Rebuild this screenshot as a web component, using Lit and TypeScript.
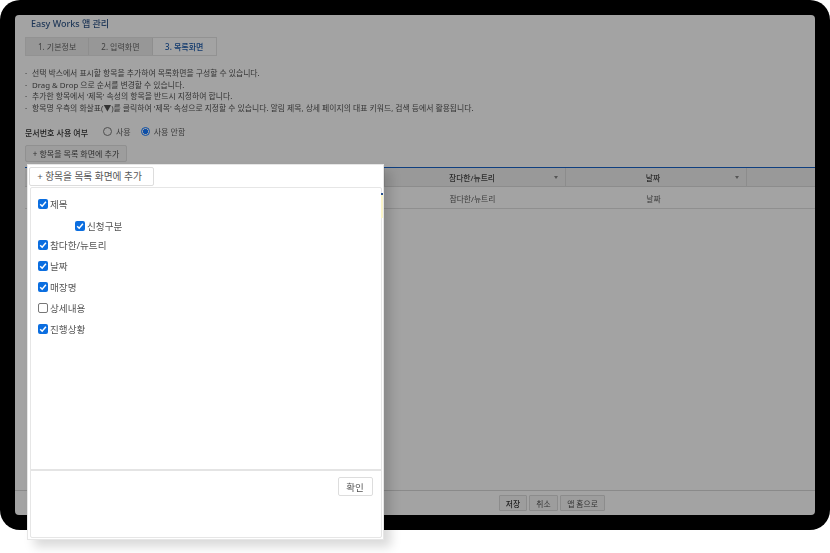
import { LitElement, html, css } from "lit";
import { customElement } from "lit/decorators.js";

const items = [
  { label: "제목", on: true },
  { label: "신청구분", on: true, sub: true },
  { label: "참다한/뉴트리", on: true },
  { label: "날짜", on: true },
  { label: "매장명", on: true },
  { label: "상세내용", on: false },
  { label: "진행상황", on: true },
];

@customElement("app-root")
export class AppRoot extends LitElement {
  static styles = css`
    :host { display: block; width: 830px; height: 553px; position: relative; overflow: hidden; background: #fff;
      font-family: "Noto Sans", "Noto Sans CJK KR", sans-serif; }
    * { box-sizing: border-box; }
    .frame { width: 829.5px; height: 530px; background: #000; border-radius: 20px; padding: 15px; filter: blur(.3px); }
    .screen { width: 800px; height: 500px; background: #a3a3a3; border-radius: 4px; display: flex; flex-direction: column; overflow: hidden; color: #333; }
    .content { flex: 1; padding: 0 0 0 12px; display: flex; flex-direction: column; }
    .title { font-size: 9px; line-height: 12px; margin: 3px 0 0 4px; color: #1c3556; font-weight: 500; }
    .tabs { display: flex; align-self: flex-start; margin: 7px 0 0 -2px; border: 1px solid #929292; height: 19px; }
    .tab { width: 63.3px; font-size: 8px; display: flex; align-items: center; justify-content: center; background: #979797; color: #3f3f3f; border-right: 1px solid #8e8e8e; }
    .tab:last-child { background: #a3a3a3; color: #123a6e; border-right: 0; font-weight: 500; }
    .notes { margin: 12px 0 0 -2px; padding: 0; list-style: none; font-size: 7.85px; line-height: 11.6px; color: #333; white-space: nowrap; }
    .notes li { position: relative; padding-left: 7px; }
    .notes li::before { content: "·"; position: absolute; left: 0; }
    .radio-row { display: flex; align-items: center; margin-top: 10px; font-size: 8px; height: 14px; }
    .radio-row b { font-weight: 500; width: 78px; margin: 2px 0 0 -2px; color: #222; }
    .radio { width: 9px; height: 9px; border-radius: 50%; border: 1px solid #4f4f4f; margin-right: 4px; background: #a3a3a3; }
    .radio.on { border: 1px solid #0d4fa8; background: radial-gradient(circle, #0d4fa8 0 2.5px, #a3a3a3 2.8px); }
    .opt { margin-right: 10px; color: #3a3a3a; }
    .add { align-self: flex-start; margin: 7px 0 0 -2px; height: 17px; width: 102px; border: 1px solid #909090; border-radius: 2px; background: #9d9d9d; font-size: 8px; display: flex; align-items: center; justify-content: center; color: #2e2e2e; }
    .table { margin: 5px 0 0 -2px; border-top: 1px solid #0f3f80; }
    .thead, .tbody { display: grid; grid-template-columns: 360px 181px 181px 1fr; font-size: 7.8px; }
    .thead { height: 19px; background: #999; border-bottom: 1px solid #8c8c8c; font-weight: 500; color: #2b2b2b; }
    .tbody { height: 22px; border-bottom: 1px solid #8f8f8f; color: #3a3a3a; padding-top: 1px; }
    .th { position: relative; display: flex; align-items: center; justify-content: center; border-right: 1px solid #8c8c8c; padding-right: 6px; }
    .th:last-child { border-right: 0; }
    .tint { position: absolute; right: 0; top: 0; bottom: 0; width: 3px; background: #a8a48c; }
    .td { display: flex; align-items: center; justify-content: center; padding-right: 6px; }
    .caret { position: absolute; right: 7px; top: 8px; width: 0; height: 0; border: 2.5px solid transparent; border-top: 3px solid #555; border-bottom: 0; }
    .footer { height: 25px; border-top: 1px solid #8a8a8a; display: flex; justify-content: center; align-items: center; gap: 2px; padding-left: 274px; }
    .fbtn { height: 16px; border: 1px solid #8c8c8c; border-radius: 1px; background: #9d9d9d; font-size: 7.8px; display: flex; align-items: center; justify-content: center; color: #333; }
    .fbtn.primary { font-weight: 500; color: #1f1f1f; }
    .popup { position: absolute; left: 27px; top: 164px; width: 356.5px; height: 375.5px; background: #fff; border: 1px solid #e6e6e6; box-shadow: 7px 7px 10px rgba(0,0,0,.15); display: flex; flex-direction: column; padding: 2px 1px 1px 2px; filter: blur(.3px); }
    .pbtn { width: 125px; height: 19px; margin-left: -1px; padding-right: 4px; border: 1px solid #ddd; border-radius: 2px; font-size: 9.7px; color: #555; display: flex; align-items: center; justify-content: center; background: #fff; line-height: 15px; }
    .panel { flex: 1; border: 1px solid #e6e6e6; margin-top: 1px; border-radius: 2px; display: flex; flex-direction: column; }
    .list { height: 283px; border-bottom: 2px solid #e4e4e4; padding-top: 5px; }
    .item { display: flex; align-items: center; height: 21px; font-size: 9.6px; color: #555; padding-left: 7px; gap: 2px; }
    .item.sub { padding-left: 44px; height: 22px; margin: 1px 0 -3px; }
    .cb { width: 10px; height: 10px; border-radius: 2px; background: #0b6ee0; display: block; flex: none; }
    .cb.off { background: #fff; border: 1px solid #777; }
    .pfoot { flex: 1; display: flex; justify-content: flex-end; align-items: flex-start; padding: 6px 8px 0 0; }
    .ok { width: 35px; height: 19px; border: 1px solid #ddd; border-radius: 2px; font-size: 9.5px; color: #555; display: flex; align-items: center; justify-content: center; }
    .strip { position: absolute; left: 353px; top: 28px; width: 2px; height: 25px; background: #fbf5c9; border-top: 2px solid #27508f; }
  `;

  render() {
    return html`
      <div class="frame">
        <div class="screen">
          <div class="content">
            <div class="title">Easy Works 앱 관리</div>
            <div class="tabs">
              <div class="tab">1. 기본정보</div><div class="tab">2. 입력화면</div><div class="tab">3. 목록화면</div>
            </div>
            <ul class="notes">
              <li>선택 박스에서 표시할 항목을 추가하여 목록화면을 구성할 수 있습니다.</li>
              <li>Drag &amp; Drop 으로 순서를 변경할 수 있습니다.</li>
              <li>추가한 항목에서 '제목' 속성의 항목을 반드시 지정하여 합니다.</li>
              <li>항목명 우측의 화살표(▼)를 클릭하여 '제목' 속성으로 지정할 수 있습니다. 알림 제목, 상세 페이지의 대표 키워드, 검색 등에서 활용됩니다.</li>
            </ul>
            <div class="radio-row">
              <b>문서번호 사용 여부</b>
              <span class="radio"></span><span class="opt">사용</span>
              <span class="radio on"></span><span class="opt">사용 안함</span>
            </div>
            <div class="add">+ 항목을 목록 화면에 추가</div>
            <div class="table">
              <div class="thead">
                <div class="th"><span class="tint"></span></div>
                <div class="th">참다한/뉴트리<span class="caret"></span></div>
                <div class="th">날짜<span class="caret"></span></div>
                <div class="th"></div>
              </div>
              <div class="tbody">
                <div class="td"></div><div class="td">참다한/뉴트리</div><div class="td">날짜</div><div class="td"></div>
              </div>
            </div>
          </div>
          <div class="footer">
            <div class="fbtn primary" style="width:28px">저장</div>
            <div class="fbtn" style="width:29px">취소</div>
            <div class="fbtn" style="width:45px">앱 홈으로</div>
          </div>
        </div>
      </div>
      <div class="popup">
        <div class="pbtn">+ 항목을 목록 화면에 추가</div>
        <div class="panel">
          <div class="list">
            ${items.map(i => html`
              <div class="item ${i.sub ? "sub" : ""}">
                ${i.on
                  ? html`<svg class="cb" viewBox="0 0 10 10"><path d="M2.2 5.2 4.2 7.2 7.9 2.8" fill="none" stroke="#fff" stroke-width="1.5"/></svg>`
                  : html`<span class="cb off"></span>`}
                <span>${i.label}</span>
              </div>`)}
          </div>
          <div class="pfoot"><div class="ok">확인</div></div>
        </div>
        <span class="strip"></span>
      </div>
    `;
  }
}
